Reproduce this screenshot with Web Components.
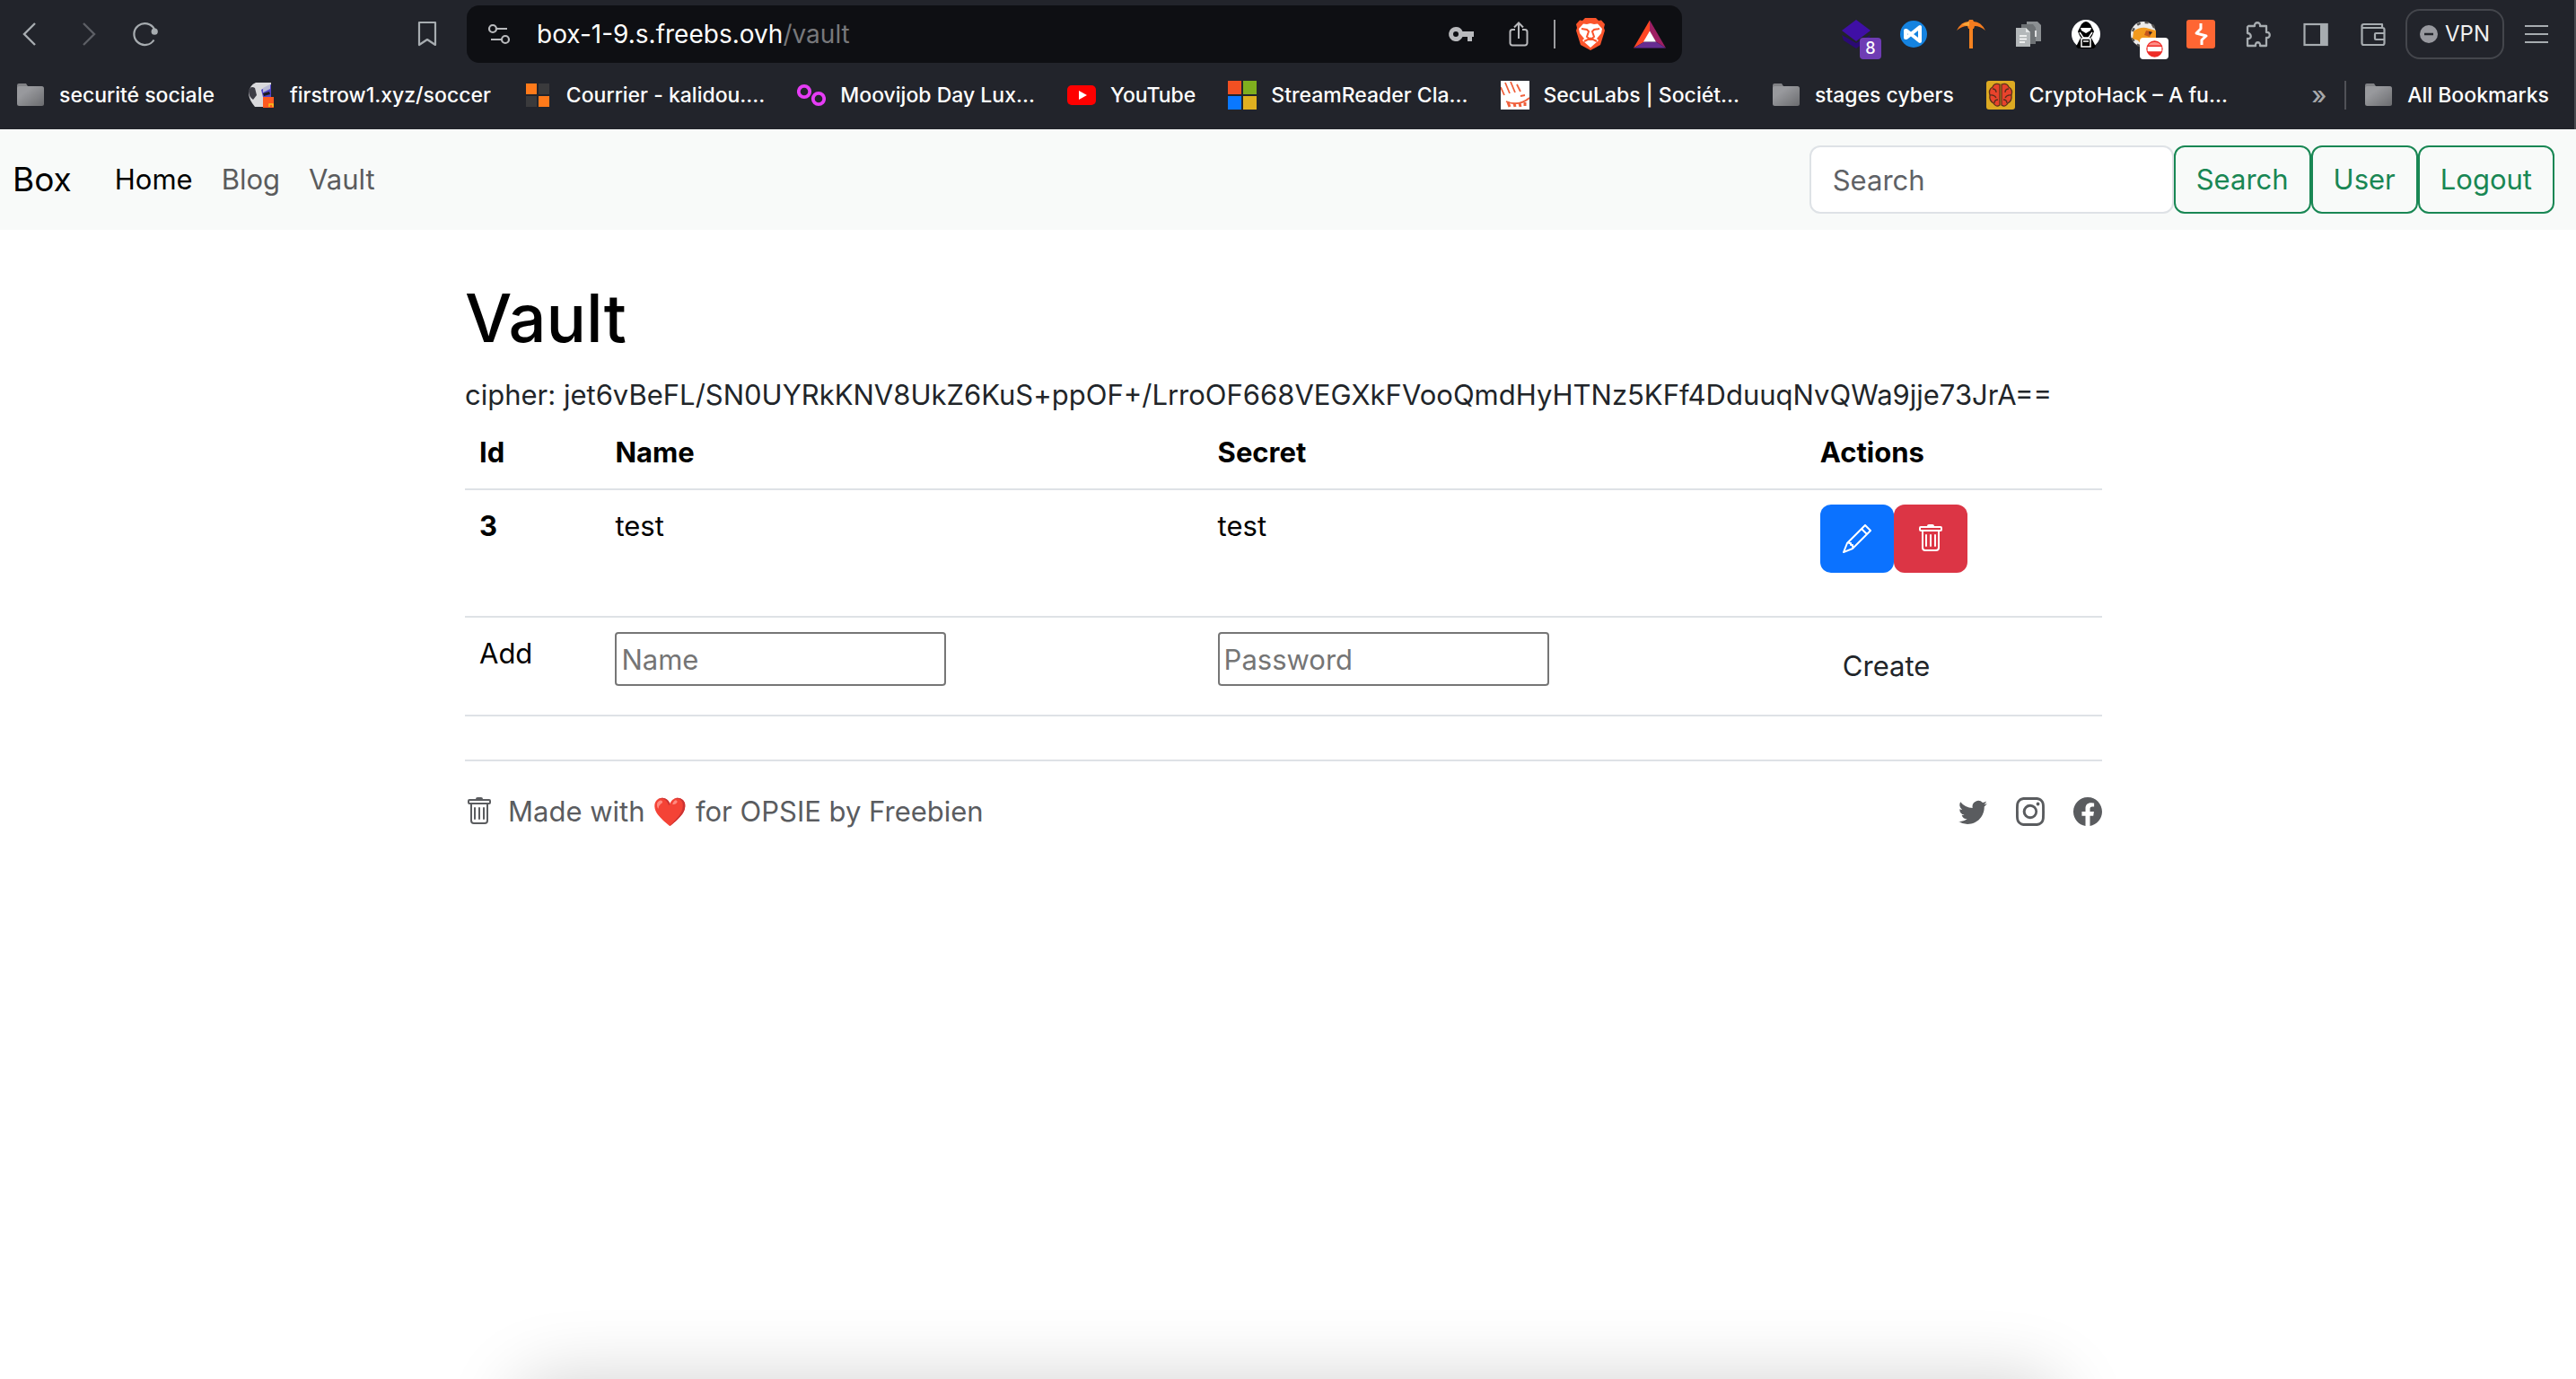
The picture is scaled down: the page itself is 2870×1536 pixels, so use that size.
<!DOCTYPE html>
<html lang="en">
<head>
<meta charset="utf-8">
<title>Vault</title>
<style>
  html, body { margin: 0; }
  body {
    min-height: 100vh;
    display: flex;
    flex-direction: column;
    background: #fff;
    color: #212529;
    font-family: Inter, "Liberation Sans", sans-serif;
    font-size: 31px;
    line-height: 48px;
  }
</style>
</head>
<body>
<browser-chrome></browser-chrome>
<site-navbar></site-navbar>
<vault-page>
  <span slot="title">Vault</span>
  <span slot="cipher">cipher: jet6vBeFL/SN0UYRkKNV8UkZ6KuS+ppOF+/LrroOF668VEGXkFVooQmdHyHTNz5KFf4DduuqNvQWa9jje73JrA==</span>
</vault-page>
<dock-shadow></dock-shadow>

<script>
const ICONS = {
  back: '<path d="M21 4 9 16l12 12" fill="none" stroke="currentColor" stroke-width="2.4"/>',
  forward: '<path d="M11 4l12 12-12 12" fill="none" stroke="currentColor" stroke-width="2.4"/>',
  reload: '<path d="M25.5 22.5A12 12 0 1 1 26 10.5" fill="none" stroke="currentColor" stroke-width="2.2"/><circle cx="26.2" cy="13.2" r="3.6" fill="currentColor"/>',
  bookmark: '<path d="M7 3h18v25l-9-6-9 6z" fill="none" stroke="currentColor" stroke-width="2.2" stroke-linejoin="round"/>',
  tune: '<g fill="none" stroke="currentColor" stroke-width="2.2"><circle cx="9" cy="10" r="4"/><path d="M13 10h12M7 22h12"/><circle cx="23" cy="22" r="4"/></g>',
  key: '<path fill="currentColor" fill-rule="evenodd" d="M10 8a8 8 0 1 0 7.5 11H23v5h5v-5h2v-6H17.500A8 8 0 0 0 10 8zm0 5a3 3 0 1 1 0 6 3 3 0 0 1 0-6z"/>',
  share: '<path d="M12 11H9a2.500 2.500 0 0 0-2.500 2.500V26A2.500 2.500 0 0 0 9 28.500h14a2.500 2.500 0 0 0 2.500-2.500V13.500A2.500 2.500 0 0 0 23 11h-3M16 21V4M11 8.500 16 3.500l5 5" fill="none" stroke="currentColor" stroke-width="2"/>',
  brave: '<path fill="#fb542b" d="M10 0h12l3 3 3-.5L32 7l-1 4 1 3-5 16-11 6-11-6L0 14l1-3-1-4 4-4.500 3 .5z"/><path fill="#fff" d="M16 6l4 1 4-.5 5 5.500-1 5-5 6 2 2-9 8-9-8 2-2-5-6-1-5 5-5.500L12 7z"/><path fill="none" stroke="#fb542b" stroke-width="2" d="M6 12l6 1 2 2-2 6 4 3 4-3-2-6 2-2 6-1M16 24v-2M9 26l7-3.500 7 3.500"/>',
  bat: '<path fill="#ff4724" d="M18 0v13l-6 11L0 31z"/><path fill="#9e1f63" d="M18 0l18 31-11-7-7-11z"/><path fill="#662d91" d="M0 31h36l-11-7H12z"/><path fill="#fff" d="M18 12l7 12H11z"/>',
  stack: '<path fill="#2b0a75" d="M0 17l16 9 16-9-2 5-14 10L2 23z"/><path fill="#3f0fa5" d="M16 0l16 12-16 12L0 12z"/>',
  code: '<circle cx="16" cy="16" r="15" fill="#1583e0"/><path fill="none" stroke="#fff" stroke-width="4" stroke-linejoin="round" d="M23 8v16L8 12H7v8h1z"/>',
  pick: '<path fill="#f57c1f" d="M0 12Q5 2 13 2l1-2h4l1 2q8 0 13 10-6-5-12-5l-1 3h-6l-1-3Q6 7 0 12z"/><path fill="#f7a63a" d="M6 5l8-3v5l-6-1z"/><path fill="#f58220" d="M14 10h4v22h-4z"/>',
  docs: '<path fill="#8b8f92" d="M14 2h12l4 4v18H14z"/><path fill="#6e7275" d="M8 5h13l3 4v18H8z"/><path fill="#b4b8ba" d="M2 9h11l5 5v16H2z"/><path d="M13 9v5h5" fill="#e3e5e6"/><path stroke="#fff" stroke-width="1.500" d="M6 18h8M6 21.500h8M6 25h6M24 12v7"/>',
  hood: '<circle cx="16" cy="16" r="16" fill="#fff"/><path d="M11 5q5-6 10 0l4 8-3 7 5 10a16 16 0 0 1-22 0l5-10-3-7z"/><path fill="#fff" d="M10 9h12l-1 3-5 3-5-3z"/><path fill="none" stroke="#fff" stroke-width="1.500" d="M9 14l4 6h6l4-6M11 21h10v9H11zM13 24h6M6 24l4-5M26 24l-4-5"/>',
  fox: '<circle cx="16" cy="16" r="14" fill="#ecebea"/><path fill="none" stroke="#55524f" stroke-width="2.500" stroke-dasharray="4 5" d="M4 13Q8 3 18 3t11 10M4 20q2 7 8 9"/><path fill="#f29a1f" d="M5 13q6-5 14-4l11 3v8l-9 2-6 7-5-6-6-2z"/><path fill="#c5551b" d="M19 12l7 1-3 6-6-2z"/><path fill="#2b2522" d="M22 13l4 1-3 3z"/>',
  noentry: '<circle cx="16" cy="16" r="14" fill="#ee2b26"/><path fill="#ff8d86" d="M5 10a13 12 0 0 1 22 0z"/><rect x="4" y="12" width="24" height="8" rx="1" fill="#fff"/>',
  burp: '<rect width="32" height="32" rx="3" fill="#ff6633"/><path fill="none" stroke="#fff" stroke-width="3" stroke-linejoin="round" d="M16 4v6l-5 5 11 3-5 4.500V28"/>',
  puzzle: '<path fill="none" stroke="currentColor" stroke-width="2.300" stroke-linejoin="round" d="M5 7h7c-1-5 7-5 6 0h7v7c5-1 5 7 0 6v9h-7c1-5-6-5-5 0H4v-8c5 1 5-6 0-6V8z"/>',
  panel: '<rect x="3.500" y="5" width="25" height="23" fill="none" stroke="currentColor" stroke-width="2.200"/><path fill="currentColor" d="M21 4h8.500v25H21z"/>',
  wallet: '<g fill="none" stroke="currentColor" stroke-width="2.200" stroke-linejoin="round"><path d="M26 9V5H5.500A2 2 0 0 0 3.500 7v19a2 2 0 0 0 2 2h21a2 2 0 0 0 2-2V11a2 2 0 0 0-2-2H4"/><path d="M28.500 15H19a1 1 0 0 0-1 1v5a1 1 0 0 0 1 1h9.500"/></g>',
  minus: '<circle cx="16" cy="16" r="16" fill="currentColor"/><path stroke="#22242b" stroke-width="4" d="M8 16h16"/>',
  menu: '<path stroke="currentColor" stroke-width="2.200" d="M3 7h26M3 16h26M3 25h26"/>',
  folder: '<linearGradient id="f" x2="1" y2="1"><stop offset=".3" stop-color="#98999d"/><stop offset="1" stop-color="#6b6c6f"/></linearGradient><path fill="#808185" d="M1 5a2 2 0 0 1 2-2h8l2 3h15v6H1z"/><rect x="1" y="6" width="30" height="22" rx="2.500" fill="url(#f)"/>',
  soccer: '<path fill="#d9d9dc" d="M10 2h17v27H9l-3-4q-4-6-4-12 1-8 8-11z"/><path fill="#3d3d46" d="M2 11q2-6 7-3l2 8-4 5q-5-3-5-10z"/><path fill="#5146c8" d="M16 10l11-6v14h-9z"/><path fill="#b9bad6" d="M18 8l8-4v5l-8 4z"/><path fill="#1a1a22" d="M18 14l7-2 1 3-7 2z"/><path fill="#ff5a1f" d="M18 18h12v12H18z"/><path stroke="#f7c51e" stroke-width="1.500" fill="none" d="M25 29v-3h4v3"/>',
  mail: '<path fill="#ff7a1a" d="M3 3h12v12H3zM17 17h12v12H17z"/><path fill="#3a3a3c" d="M17 3h12v12H17zM3 17h12v12H3z"/>',
  rings: '<g fill="none" stroke="#e63cf5" stroke-width="3.800"><circle cx="8" cy="12" r="6.200"/><circle cx="24" cy="20" r="6.200"/></g>',
  youtube: '<rect y="5" width="32" height="22" rx="5" fill="#f00"/><path fill="#fff" d="M13 11l9 5-9 5z"/>',
  windows: '<path fill="#f25022" d="M0 0h15v15H0z"/><path fill="#7fae1e" d="M17 0h15v15H17z"/><path fill="#0a78ff" d="M0 17h15v15H0z"/><path fill="#e0b020" d="M17 17h15v15H17z"/>',
  secu: '<path fill="#fff" d="M0 0h32v32H0z"/><g fill="none" stroke="#f0603c" stroke-width="1.800"><path d="M0 7l4 9M5 2l5 12M11 1l5 12M18 4l4 8M6 23q14 6 26-4M22 17l5-1"/><path stroke-width="3" d="M8 24l2 5M15 25l1 4M21 25l1 4M27 24v4"/></g>',
  brain: '<rect width="32" height="32" rx="3" fill="#ddaa22"/><path fill="#e8432c" stroke="#5c2f1c" stroke-width="1.300" d="M15 4q-6-2-8 3-5 3-3 9-1 6 4 9 3 5 7 2zM17 4q6-2 8 3 5 3 3 9 1 6-4 9-3 5-7 2z"/><path fill="none" stroke="#5c2f1c" stroke-width="1.300" d="M7 9q4 0 4 4M4 16q5-1 7 3M9 25q0-4 4-4M25 9q-4 0-4 4M28 16q-5-1-7 3M23 25q0-4-4-4"/>'
};
const BI = {
  pencil: '<path d="M12.146.146a.5.5 0 0 1 .708 0l3 3a.5.5 0 0 1 0 .708l-10 10a.5.5 0 0 1-.168.11l-5 2a.5.5 0 0 1-.65-.65l2-5a.5.5 0 0 1 .11-.168zM11.207 2.5 13.5 4.793 14.793 3.5 12.5 1.207zm1.586 3L10.5 3.207 4 9.707V10h.5a.5.5 0 0 1 .5.5v.5h.5a.5.5 0 0 1 .5.5v.5h.293zm-9.761 5.175-.106.106-1.528 3.821 3.821-1.528.106-.106A.5.5 0 0 1 5 12.5V12h-.5a.5.5 0 0 1-.5-.5V11h-.5a.5.5 0 0 1-.468-.325"/>',
  trash: '<path d="M5.500 5.500A.5.5 0 0 1 6 6v6a.5.5 0 0 1-1 0V6a.5.5 0 0 1 .5-.5m2.500 0a.5.5 0 0 1 .5.5v6a.5.5 0 0 1-1 0V6a.5.5 0 0 1 .5-.5m3 .5a.5.5 0 0 0-1 0v6a.5.5 0 0 0 1 0z"/><path d="M14.500 3a1 1 0 0 1-1 1H13v9a2 2 0 0 1-2 2H5a2 2 0 0 1-2-2V4h-.5a1 1 0 0 1-1-1V2a1 1 0 0 1 1-1H6a1 1 0 0 1 1-1h2a1 1 0 0 1 1 1h3.500a1 1 0 0 1 1 1zM4.118 4 4 4.059V13a1 1 0 0 0 1 1h6a1 1 0 0 0 1-1V4.059L11.882 4zM2.500 3h11V2h-11z"/>',
  twitter: '<path d="M5.026 15c6.038 0 9.341-5.003 9.341-9.334q.002-.211-.006-.422A6.700 6.700 0 0 0 16 3.542a6.700 6.700 0 0 1-1.889.518 3.300 3.300 0 0 0 1.447-1.817 6.500 6.500 0 0 1-2.087.793A3.286 3.286 0 0 0 7.875 6.030a9.320 9.320 0 0 1-6.767-3.429 3.290 3.290 0 0 0 1.018 4.382A3.300 3.300 0 0 1 .64 6.575v.045a3.290 3.290 0 0 0 2.632 3.218 3.200 3.200 0 0 1-.865.115 3 3 0 0 1-.614-.057 3.280 3.280 0 0 0 3.067 2.277A6.600 6.600 0 0 1 .78 13.580a6 6 0 0 1-.78-.045A9.340 9.340 0 0 0 5.026 15"/>',
  instagram: '<path d="M8 0C5.829 0 5.556.010 4.703.048 3.850.088 3.269.222 2.760.420a3.900 3.900 0 0 0-1.417.923A3.900 3.900 0 0 0 .42 2.760C.222 3.268.087 3.850.048 4.700.010 5.555 0 5.827 0 8.001c0 2.172.010 2.444.048 3.297.040.852.174 1.433.372 1.942.205.526.478.972.923 1.417.444.445.890.719 1.416.923.510.198 1.090.333 1.942.372C5.555 15.990 5.827 16 8 16s2.444-.010 3.298-.048c.851-.040 1.434-.174 1.943-.372a3.900 3.900 0 0 0 1.416-.923c.445-.445.718-.891.923-1.417.197-.509.332-1.090.372-1.942C15.990 10.445 16 10.173 16 8s-.010-2.445-.048-3.299c-.040-.851-.175-1.433-.372-1.941a3.900 3.900 0 0 0-.923-1.417A3.900 3.900 0 0 0 13.240.420c-.510-.198-1.092-.333-1.943-.372C10.443.010 10.172 0 7.998 0zm-.717 1.442h.718c2.136 0 2.389.007 3.232.046.780.035 1.204.166 1.486.275.373.145.640.319.920.599s.453.546.598.920c.110.281.240.705.275 1.485.039.843.047 1.096.047 3.231s-.008 2.389-.047 3.232c-.035.780-.166 1.203-.275 1.485a2.500 2.500 0 0 1-.599.919c-.280.280-.546.453-.920.598-.280.110-.704.240-1.485.276-.843.038-1.096.047-3.232.047s-2.390-.009-3.233-.047c-.780-.036-1.203-.166-1.485-.276a2.500 2.500 0 0 1-.920-.598 2.500 2.500 0 0 1-.600-.920c-.109-.281-.240-.705-.275-1.485-.038-.843-.046-1.096-.046-3.233s.008-2.388.046-3.231c.036-.780.166-1.204.276-1.486.145-.373.319-.640.599-.920s.546-.453.920-.598c.282-.110.705-.240 1.485-.276.738-.034 1.024-.044 2.515-.045zm4.988 1.328a.960.960 0 1 0 0 1.920.960.960 0 0 0 0-1.920m-4.270 1.122a4.109 4.109 0 1 0 0 8.217 4.109 4.109 0 0 0 0-8.217m0 1.441a2.667 2.667 0 1 1 0 5.334 2.667 2.667 0 0 1 0-5.334"/>',
  facebook: '<path d="M16 8.049c0-4.446-3.582-8.050-8-8.050C3.580 0-.002 3.603-.002 8.050c0 4.017 2.926 7.347 6.750 7.951v-5.625h-2.030V8.050H6.750V6.275c0-2.017 1.195-3.131 3.022-3.131.876 0 1.791.157 1.791.157v1.980h-1.009c-.993 0-1.303.621-1.303 1.258v1.510h2.218l-.354 2.326H9.250V16c3.824-.604 6.750-3.934 6.750-7.951"/>'
};
const BOXES = { brave: '0 0 32 36', bat: '0 0 36 31' };

class UiIcon extends HTMLElement {
  constructor() { super(); this.attachShadow({ mode: 'open' }); }
  connectedCallback() {
    const name = this.getAttribute('name');
    const bi = name in BI;
    const box = bi ? '0 0 16 16' : BOXES[name] || '0 0 32 32';
    this.shadowRoot.innerHTML = `<style>
      :host { display: block; flex: none; width: 32px; height: 32px; }
      svg { display: block; width: 100%; height: 100%; }
    </style><svg viewBox="${box}" aria-hidden="true"${bi ? ' fill="currentColor"' : ''}>${bi ? BI[name] : ICONS[name]}</svg>`;
  }
}

class BookmarkLink extends HTMLElement {
  constructor() { super(); this.attachShadow({ mode: 'open' }); }
  connectedCallback() {
    this.shadowRoot.innerHTML = `<style>
      :host { display: block; flex: none; }
      a { display: flex; align-items: center; gap: 16px; color: inherit; text-decoration: none; white-space: nowrap; }
    </style><a href="#"><ui-icon name="${this.getAttribute('icon')}"></ui-icon><slot></slot></a>`;
  }
}

class BrowserChrome extends HTMLElement {
  constructor() {
    super();
    this.attachShadow({ mode: 'open' }).innerHTML = `<style>
      :host { display: block; height: 144px; background: #22242b; color: #fff; font-size: 24px; line-height: 32px; border-right: 2px solid #4a4b50; box-sizing: border-box; }
      button { display: flex; align-items: center; justify-content: center; flex: none; border: 0; padding: 0; background: none; color: #a7acb0; font: inherit; }
      .tools { display: grid; grid-template-columns: 520px minmax(0, 1fr) 994px; align-items: center; height: 76px; }
      .nav { display: flex; gap: 32px; padding: 0 28px 0 18px; }
      .nav .mark { margin-left: auto; }
      .nav .off { color: #5d5f65; }
      .url { display: flex; align-items: center; height: 64px; border-radius: 14px; background: #0e0f13; padding: 0 18px 0 20px; font-size: 28px; color: #b9babd; }
      .address { flex: 1; margin-left: 26px; color: #77787b; }
      .address b { font-weight: 400; color: #fff; }
      .acts { display: flex; align-items: center; gap: 32px; }
      .bar { width: 2px; height: 32px; background: #9b9c9f; margin: 0 -9px; }
      .brave { height: 36px; }
      .bat { width: 36px; }
      .ext { display: flex; align-items: center; justify-content: flex-end; gap: 32px; padding-right: 26px; }
      .ext button { position: relative; }
      .badge { position: absolute; left: 20px; top: 20px; width: 24px; height: 24px; border-radius: 4px; background: #6f3cb4; color: #fff; font-size: 18px; line-height: 24px; font-weight: 500; text-align: center; }
      .stop { position: absolute; left: 12px; top: 20px; width: 32px; height: 24px; border-radius: 4px; background: #fff; display: flex; align-items: center; justify-content: center; }
      .stop ui-icon { width: 21px; height: 21px; }
      .ext .vpn { gap: 8px; height: 56px; width: 110px; margin: 0 -12px; border: 2px solid #44464c; border-radius: 16px; color: #f0f0f0; box-sizing: border-box; }
      .vpn ui-icon { width: 20px; height: 20px; color: #98999f; }
      .marks { display: flex; align-items: center; gap: 36px; height: 60px; padding: 0 28px 0 18px; font-size: 23px; font-weight: 500; }
      .more { margin-left: auto; font-size: 28px; line-height: 28px; color: #a7a8ab; }
      .rule { width: 2px; height: 32px; background: #505157; margin: 0 -16px; }
    </style>
    <div class="tools">
      <div class="nav">
        <button aria-label="Back"><ui-icon name="back"></ui-icon></button>
        <button aria-label="Forward" class="off"><ui-icon name="forward"></ui-icon></button>
        <button aria-label="Reload"><ui-icon name="reload"></ui-icon></button>
        <button aria-label="Bookmark this page" class="mark"><ui-icon name="bookmark"></ui-icon></button>
      </div>
      <div class="url">
        <ui-icon name="tune"></ui-icon>
        <span class="address"><b>box-1-9.s.freebs.ovh</b>/vault</span>
        <div class="acts">
          <ui-icon name="key"></ui-icon><ui-icon name="share"></ui-icon><div class="bar"></div>
          <ui-icon name="brave" class="brave"></ui-icon><ui-icon name="bat" class="bat"></ui-icon>
        </div>
      </div>
      <div class="ext">
        <button aria-label="Stack"><ui-icon name="stack"></ui-icon><span class="badge">8</span></button>
        <button aria-label="Code"><ui-icon name="code"></ui-icon></button>
        <button aria-label="Pickaxe"><ui-icon name="pick"></ui-icon></button>
        <button aria-label="Documents"><ui-icon name="docs"></ui-icon></button>
        <button aria-label="Hood"><ui-icon name="hood"></ui-icon></button>
        <button aria-label="Proxy"><ui-icon name="fox"></ui-icon><span class="stop"><ui-icon name="noentry"></ui-icon></span></button>
        <button aria-label="Bolt"><ui-icon name="burp"></ui-icon></button>
        <button aria-label="Extensions"><ui-icon name="puzzle"></ui-icon></button>
        <button aria-label="Side panel"><ui-icon name="panel"></ui-icon></button>
        <button aria-label="Wallet"><ui-icon name="wallet"></ui-icon></button>
        <button class="vpn"><ui-icon name="minus"></ui-icon>VPN</button>
        <button aria-label="Menu"><ui-icon name="menu"></ui-icon></button>
      </div>
    </div>
    <div class="marks">
      <bookmark-link icon="folder">securité sociale</bookmark-link>
      <bookmark-link icon="soccer">firstrow1.xyz/soccer</bookmark-link>
      <bookmark-link icon="mail">Courrier - kalidou....</bookmark-link>
      <bookmark-link icon="rings">Moovijob Day Lux...</bookmark-link>
      <bookmark-link icon="youtube">YouTube</bookmark-link>
      <bookmark-link icon="windows">StreamReader Cla...</bookmark-link>
      <bookmark-link icon="secu">SecuLabs | Sociét...</bookmark-link>
      <bookmark-link icon="folder">stages cybers</bookmark-link>
      <bookmark-link icon="brain">CryptoHack – A fu...</bookmark-link>
      <button class="more">»</button>
      <div class="rule"></div>
      <bookmark-link icon="folder">All Bookmarks</bookmark-link>
    </div>`;
  }
}

class SiteNavbar extends HTMLElement {
  constructor() {
    super();
    this.attachShadow({ mode: 'open' }).innerHTML = `<style>
      :host { display: block; background: #f8faf9; }
      nav { display: flex; align-items: center; height: 112px; padding: 0 24px 0 14px; }
      a { color: #5b5c5d; text-decoration: none; }
      .brand { color: #000; font-size: 37px; margin-right: 48px; }
      .links { display: flex; gap: 32px; flex: 1; }
      .links .active { color: #000; }
      form { display: flex; }
      input, button { box-sizing: border-box; height: 76px; padding: 0 24px; border-radius: 12px; font: inherit; }
      input { width: 406px; border: 2px solid #dee2e6; background: #fff; color: #212529; }
      input::placeholder { color: #5f6266; opacity: 1; }
      button { border: 2px solid #198754; padding: 0 23px; background: none; color: #198754; }
    </style>
    <nav>
      <a class="brand" href="#">Box</a>
      <div class="links"><a class="active" href="#">Home</a><a href="#">Blog</a><a href="#">Vault</a></div>
      <form><input type="search" placeholder="Search" aria-label="Search"><button type="button">Search</button><button type="button">User</button><button type="button">Logout</button></form>
    </nav>`;
  }
}

class VaultPage extends HTMLElement {
  constructor() {
    super();
    this.attachShadow({ mode: 'open' }).innerHTML = `<style>
      :host { display: block; padding: 48px 10px 0 0; }
      main { max-width: 1824px; margin: 0 auto; }
      h1 { margin: 0 0 12px; color: #000; font-size: 74px; line-height: 100px; font-weight: 500; }
      p { margin: 0; }
    </style>
    <main>
      <h1><slot name="title"></slot></h1>
      <p><slot name="cipher"></slot></p>
      <vault-table></vault-table>
      <site-footer></site-footer>
    </main>`;
  }
}

class VaultTable extends HTMLElement {
  constructor() {
    super();
    this.attachShadow({ mode: 'open' }).innerHTML = `<style>
      :host { display: block; margin-bottom: 48px; color: #000; }
      table { width: 100%; border-collapse: separate; border-spacing: 0; table-layout: fixed; }
      th, td { box-sizing: border-box; padding: 16px; text-align: left; vertical-align: top; border-bottom: 2px solid #dee2e6; }
      th { font-weight: 700; }
      .id { width: 8.3%; }
      .field { width: 36.8%; }
      .actions { display: flex; margin-bottom: 32px; }
      button { box-sizing: border-box; height: 76px; display: flex; align-items: center; padding: 0 25px; border: 0; border-radius: 12px; color: #fff; font: inherit; }
      .edit { background: #0b72ff; }
      .delete { background: #dc3545; }
      .create { background: none; color: #212529; }
      input { display: block; box-sizing: border-box; width: 369px; height: 60px; padding: 2px 5px; border: 2px solid #767676; border-radius: 4px; background: #fff; font: inherit; }
      input::placeholder { color: #757575; opacity: 1; }
    </style>
    <table>
      <thead><tr><th class="id" scope="col">Id</th><th class="field" scope="col">Name</th><th class="field" scope="col">Secret</th><th scope="col">Actions</th></tr></thead>
      <tbody>
        <tr><th scope="row">3</th><td>test</td><td>test</td><td><div class="actions"><button class="edit" aria-label="Edit"><ui-icon name="pencil"></ui-icon></button><button class="delete" aria-label="Delete"><ui-icon name="trash"></ui-icon></button></div></td></tr>
        <tr><td>Add</td><td><input type="text" placeholder="Name" aria-label="Name"></td><td><input type="password" placeholder="Password" aria-label="Password"></td><td><button class="create">Create</button></td></tr>
      </tbody>
    </table>`;
  }
}

class SiteFooter extends HTMLElement {
  constructor() {
    super();
    this.attachShadow({ mode: 'open' }).innerHTML = `<style>
      :host { display: block; border-top: 2px solid #dee2e6; padding: 32px 0; color: #5a5c5f; }
      footer, .made, .social { display: flex; align-items: center; }
      footer { justify-content: space-between; }
      .made { gap: 16px; }
      .social { gap: 32px; }
      a { color: inherit; }
    </style>
    <footer>
      <div class="made"><ui-icon name="trash"></ui-icon><span>Made with ❤️ for OPSIE by Freebien</span></div>
      <div class="social">
        <a href="#" aria-label="Twitter"><ui-icon name="twitter"></ui-icon></a>
        <a href="#" aria-label="Instagram"><ui-icon name="instagram"></ui-icon></a>
        <a href="#" aria-label="Facebook"><ui-icon name="facebook"></ui-icon></a>
      </div>
    </footer>`;
  }
}

class DockShadow extends HTMLElement {
  constructor() {
    super();
    this.attachShadow({ mode: 'open' }).innerHTML = `<style>
      :host { display: block; height: 96px; margin-top: auto; overflow: hidden; }
      div { height: 96px; margin: 96px 20% 0; border-radius: 40px; box-shadow: 0 0 80px rgba(0, 0, 0, .18); }
    </style><div></div>`;
  }
}

customElements.define('ui-icon', UiIcon);
customElements.define('bookmark-link', BookmarkLink);
customElements.define('browser-chrome', BrowserChrome);
customElements.define('site-navbar', SiteNavbar);
customElements.define('vault-table', VaultTable);
customElements.define('site-footer', SiteFooter);
customElements.define('vault-page', VaultPage);
customElements.define('dock-shadow', DockShadow);
</script>
</body>
</html>
